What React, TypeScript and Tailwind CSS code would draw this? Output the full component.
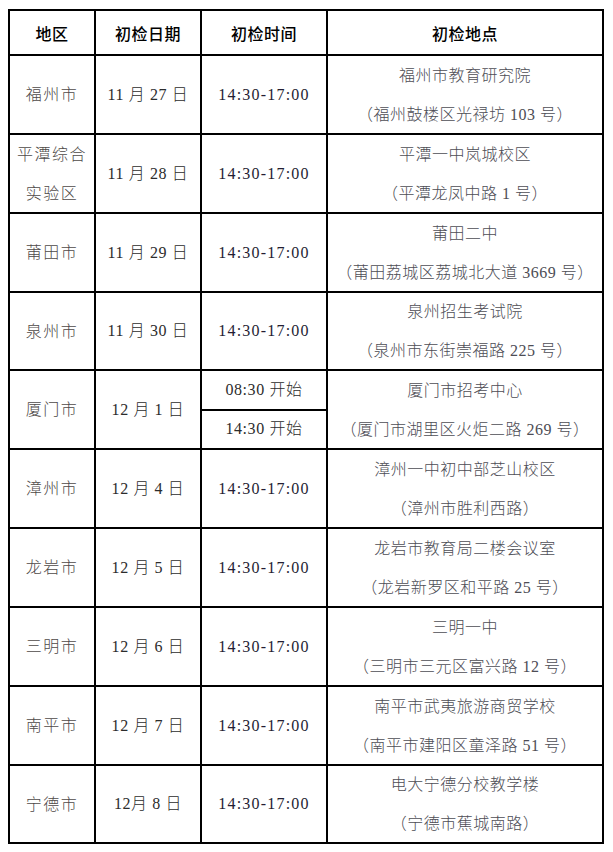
const rows = [
  { region: ["福州市"], date: "11 月 27 日", time: "14:30-17:00", place: "福州市教育研究院", addr: "（福州鼓楼区光禄坊 103 号）", h: "h-[79px]" },
  { region: ["平潭综合", "实验区"], date: "11 月 28 日", time: "14:30-17:00", place: "平潭一中岚城校区", addr: "（平潭龙凤中路 1 号）", h: "h-[79px]" },
  { region: ["莆田市"], date: "11 月 29 日", time: "14:30-17:00", place: "莆田二中", addr: "（莆田荔城区荔城北大道 3669 号）", h: "h-[79px]" },
  { region: ["泉州市"], date: "11 月 30 日", time: "14:30-17:00", place: "泉州招生考试院", addr: "（泉州市东街崇福路 225 号）", h: "h-[78px]" },
  { region: ["厦门市"], date: "12 月 1 日", time: "", place: "厦门市招考中心", addr: "（厦门市湖里区火炬二路 269 号）", h: "h-[79px]" },
  { region: ["漳州市"], date: "12 月 4 日", time: "14:30-17:00", place: "漳州一中初中部芝山校区", addr: "（漳州市胜利西路）", h: "h-[79px]" },
  { region: ["龙岩市"], date: "12 月 5 日", time: "14:30-17:00", place: "龙岩市教育局二楼会议室", addr: "（龙岩新罗区和平路 25 号）", h: "h-[79px]" },
  { region: ["三明市"], date: "12 月 6 日", time: "14:30-17:00", place: "三明一中", addr: "（三明市三元区富兴路 12 号）", h: "h-[79px]" },
  { region: ["南平市"], date: "12 月 7 日", time: "14:30-17:00", place: "南平市武夷旅游商贸学校", addr: "（南平市建阳区童泽路 51 号）", h: "h-[79px]" },
  { region: ["宁德市"], date: "12月 8 日", time: "14:30-17:00", place: "电大宁德分校教学楼", addr: "（宁德市蕉城南路）", h: "h-[78px]" },
];

const serif = "font-['Liberation_Serif','Noto_Sans_CJK_SC',serif] font-light text-[16px]";
const cell = "flex flex-col items-center justify-center border-r-2 border-b-2 border-black";

export default function App() {
  return (
    <div className="w-[613px] h-[852px] bg-white">
      <div className="ml-[8px] mt-[9px] w-[596px] border-l-2 border-t-2 border-black">
        {/* header */}
        <div className="flex h-[45px] font-['Noto_Sans_CJK_SC',sans-serif] font-medium text-[16px] tracking-[0.5px] text-black">
          <div className={`${cell} w-[86px]`}>地区</div>
          <div className={`${cell} w-[106px]`}>初检日期</div>
          <div className={`${cell} w-[126px]`}>初检时间</div>
          <div className={`${cell} w-[276px]`}>初检地点</div>
        </div>

        {rows.map((r) => (
          <div key={r.region.join("")} className={`flex ${r.h} ${serif}`}>
            <div className={`${cell} w-[86px] text-[#4e4a48] tracking-[1.5px] leading-[39px]`}>
              {r.region.map((l) => (
                <span key={l}>{l}</span>
              ))}
            </div>
            <div className={`${cell} w-[106px] text-[#2c2c2c] tracking-[0.6px]`}>{r.date}</div>
            {r.time ? (
              <div className={`${cell} w-[126px] text-[#241d33] tracking-[1.2px]`}>{r.time}</div>
            ) : (
              <div className="flex flex-col w-[126px] text-[#2c2c2c] tracking-[0.6px]">
                <div className="flex-1 flex items-center justify-center border-r-2 border-b-2 border-black">08:30 开始</div>
                <div className="flex-1 flex items-center justify-center border-r-2 border-b-2 border-black">14:30 开始</div>
              </div>
            )}
            <div className={`${cell} w-[276px] text-[#4d4d55] tracking-[0.5px] leading-[39px]`}>
              <span>{r.place}</span>
              <span>{r.addr}</span>
            </div>
          </div>
        ))}
      </div>
    </div>
  );
}
